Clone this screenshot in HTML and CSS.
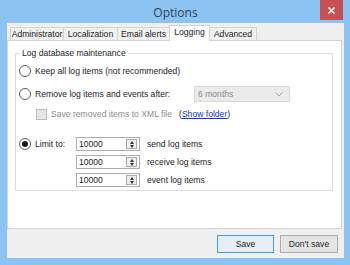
FILE: index.html
```html
<!DOCTYPE html>
<html>
<head>
<meta charset="utf-8">
<link rel="stylesheet" href="styles.css">
</head>
<body>
<div class="window">
  <div class="titlebar">
    <span class="title">Options</span>
    <div class="close"><svg width="9" height="9" viewBox="0 0 9 9"><path d="M1.5 1.5 L7.5 7.5 M7.5 1.5 L1.5 7.5" stroke="#fff" stroke-width="1.6"/></svg></div>
  </div>
  <div class="client">
    <div class="tabs">
      <div class="tab t1">Administrator</div>
      <div class="tab t2">Localization</div>
      <div class="tab t3">Email alerts</div>
      <div class="tab t4 active">Logging</div>
      <div class="tab t5">Advanced</div>
    </div>
    <div class="panel">
      <fieldset class="group">
        <legend>Log database maintenance</legend>
        <div class="row r1"><span class="radio"></span><span>Keep all log items (not recommended)</span></div>
        <div class="row r2">
          <span class="radio"></span><span class="grow">Remove log items and events after:</span>
          <div class="combo"><span>6 months</span><svg width="8" height="5" viewBox="0 0 8 5"><path d="M0.5 0.5 L4 4 L7.5 0.5" fill="none" stroke="#a8a8a8" stroke-width="1"/></svg></div>
        </div>
        <div class="row r3">
          <span class="check"></span><span class="dim xml">Save removed items to XML file</span>
          <span class="folder">(<a href="#">Show folder</a>)</span>
        </div>
        <div class="limit">
          <div class="limlabel"><span class="radio on"></span><span>Limit to:</span></div>
          <div class="spins">
            <div class="spinrow"><div class="spin"><span>10000</span><div class="arrows"><i class="up"></i><i class="dn"></i></div></div><span>send log items</span></div>
            <div class="spinrow"><div class="spin"><span>10000</span><div class="arrows"><i class="up"></i><i class="dn"></i></div></div><span>receive log items</span></div>
            <div class="spinrow"><div class="spin"><span>10000</span><div class="arrows"><i class="up"></i><i class="dn"></i></div></div><span>event log items</span></div>
          </div>
        </div>
      </fieldset>
    </div>
    <div class="footer">
      <button class="btn default">Save</button>
      <button class="btn">Don't save</button>
    </div>
  </div>
</div>
</body>
</html>
```
FILE: styles.css
```css
* { box-sizing: border-box; }
body { margin: 0; font-family: "Liberation Sans", Arial, sans-serif; font-size: 8.6px; color: #1e1e1e; }
.window { width: 350px; height: 265px; background: #8cc3f3; padding: 0 6px 7px 7px; display: flex; flex-direction: column; }
.titlebar { height: 23px; position: relative; display: flex; align-items: center; justify-content: center; }
.title { font-family: "Open Sans", "Liberation Sans", sans-serif; font-size: 12px; color: #2e3f53; margin-top: 2px; }
.close { position: absolute; right: 1px; top: 0; width: 23px; height: 20px; background: #c75050; display: flex; align-items: center; justify-content: center; }
.client { flex: 1; background: #f0f0f0; display: flex; flex-direction: column; }
.tabs { height: 17px; display: flex; align-items: flex-end; padding-left: 3px; }
.tab { height: 13px; border: 1px solid #d4d4d4; border-bottom: none; border-right: none; background: #f0f0f0; line-height: 12px; color: #1e1e1e; text-align: center; white-space: nowrap; }
.t1 { width: 53px; }
.t2 { width: 54px; }
.t3 { width: 52px; }
.t4 { width: 41px; }
.t5 { width: 47px; border-right: 1px solid #d4d4d4; }
.tab.active { height: 16px; background: #fff; line-height: 12px; margin-bottom: -1px; position: relative; z-index: 1; border-right: 1px solid #d4d4d4; }
.tab.active + .tab { border-left: none; }
.panel { height: 189px; background: #fff; border: 1px solid #d4d4d4; margin-right: 2px; padding: 6px 8px 0 7px; }
.group { margin: 0; border: 1px solid #dcdcdc; padding: 0 0 0 3px; height: 144px; }
.group legend { padding: 0 2px; margin-left: 1px; color: #1e1e1e; line-height: 13px; }
.row { display: flex; align-items: center; height: 14px; }
.r1 { margin-top: 4px; }
.r2 { margin-top: 8px; height: 16px; }
.r3 { margin-top: 5px; padding-left: 17px; }
.grow { flex: 1; }
.radio { width: 12px; height: 12px; border: 1px solid #5c5c5c; border-radius: 50%; background: #fff; margin-right: 4px; flex: none; display: flex; align-items: center; justify-content: center; }
.radio.on::after { content: ""; width: 6px; height: 6px; border-radius: 50%; background: #1b1b1b; }
.check { width: 11px; height: 11px; border: 1px solid #bcbcbc; background: #e6e6e6; margin-right: 4px; flex: none; }
.dim { color: #8d8d8d; }
.xml { width: 128px; white-space: nowrap; }
.combo { width: 96px; height: 16px; margin-right: 42px; background: #ebebeb; border: 1px solid #d9d9d9; display: flex; align-items: center; justify-content: space-between; padding: 0 6px 0 3px; color: #8a8a8a; }
.folder a { color: #0a35d0; text-decoration: underline; }
.limit { display: flex; margin-top: 10px; }
.limlabel { display: flex; align-items: center; height: 14px; width: 57px; margin-top: 6px; }
.spins { display: flex; flex-direction: column; gap: 4px; margin-top: 6px; }
.spinrow { display: flex; align-items: center; gap: 7px; }
.spin { width: 64px; height: 14px; border: 1px solid #abadb3; display: flex; justify-content: space-between; align-items: stretch; padding-left: 2px; line-height: 12px; background: #fff; }
.arrows { width: 11px; margin: 1px 2px 1px 0; border: 1px solid #acacac; background: #ececec; display: flex; flex-direction: column; justify-content: space-around; align-items: center; }
.arrows i { display: block; width: 0; height: 0; border-left: 2.5px solid transparent; border-right: 2.5px solid transparent; }
.arrows .up { border-bottom: 3px solid #333; }
.arrows .dn { border-top: 3px solid #333; }
.footer { flex: 1; display: flex; justify-content: flex-end; align-items: center; gap: 6px; padding-right: 6px; padding-top: 1px; }
.btn { font-family: "Liberation Sans", Arial, sans-serif; font-size: 8.6px; width: 58px; height: 18px; padding: 0; background: #e5e5e5; border: 1px solid #acacac; color: #1e1e1e; }
.btn.default { width: 57px; border-color: #3c9ce6; background: #e6eef6; }
```
